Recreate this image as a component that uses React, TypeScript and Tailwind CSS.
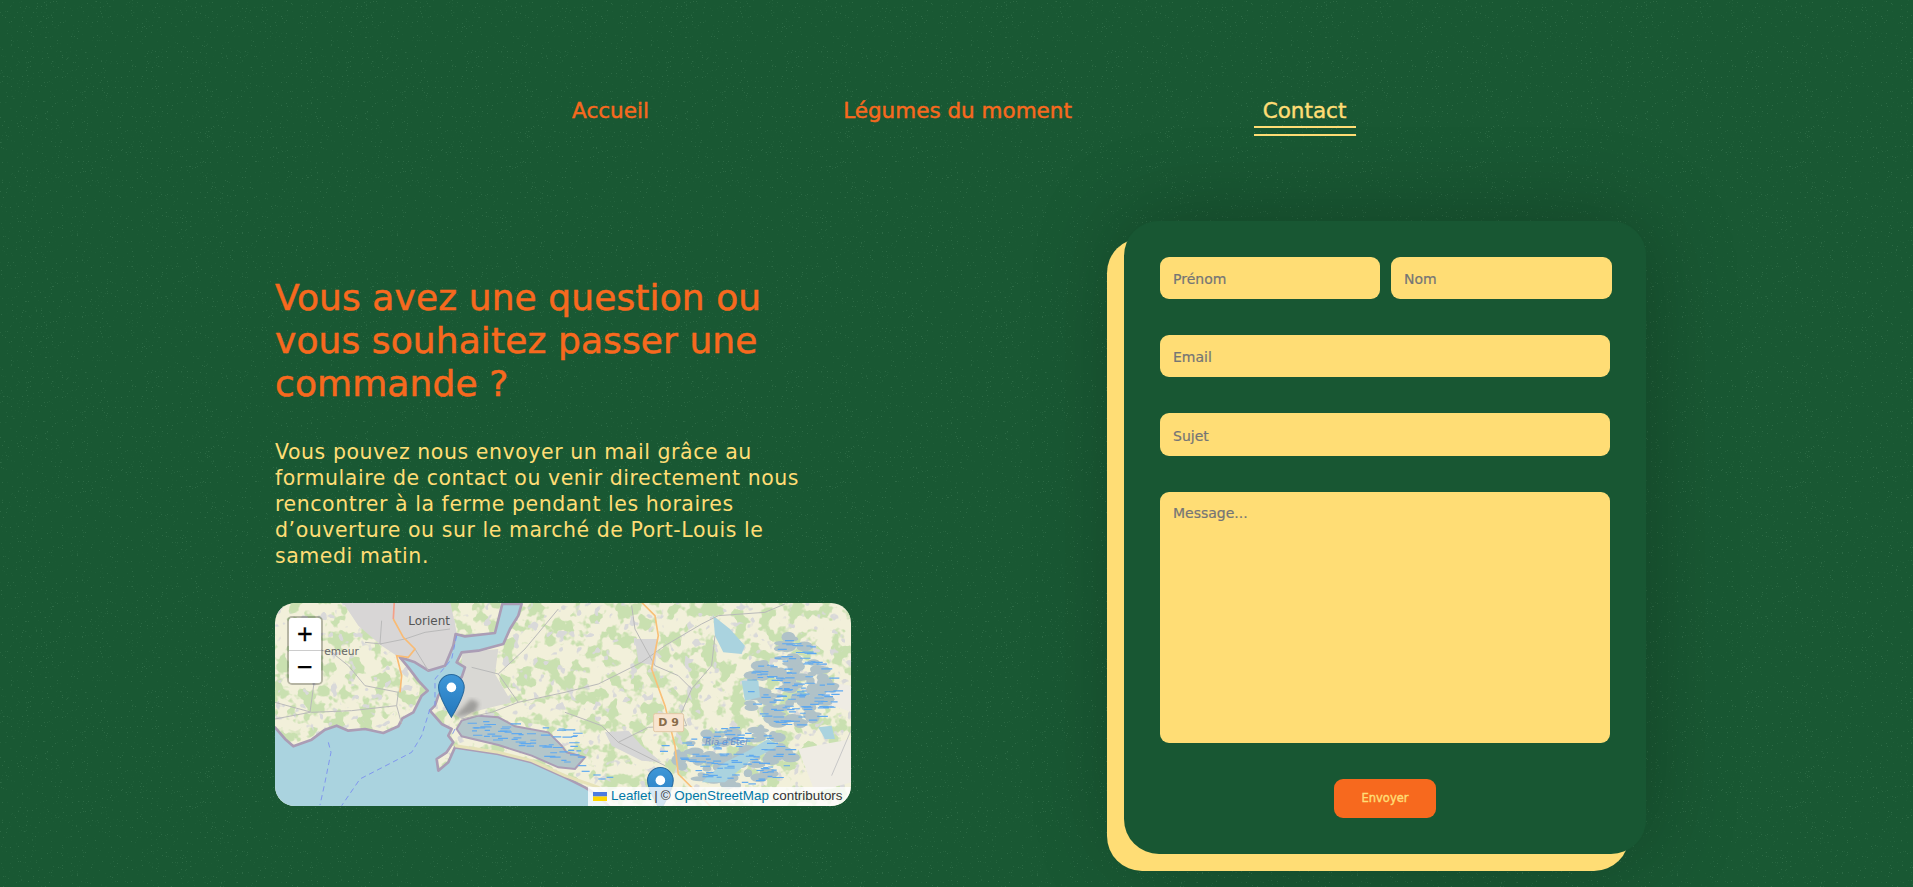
// small seeded generator, so the map dashes stay the same between runs
const makeRandom = (seed: number) => () => {
  seed = (seed * 16807) % 2147483647;
  return seed / 2147483647;
};

const rnd = makeRandom(4242);

const marshAreas = [
  [1440, 180, 270, 210],
  [1235, 390, 345, 180],
  [1525, 120, 115, 95],
];
const inMarsh = () => {
  const [x, y, w, h] = marshAreas[rnd() < 0.46 ? 0 : rnd() < 0.85 ? 1 : 2];
  const a = rnd() * Math.PI * 2;
  const r = Math.sqrt(rnd()) * 0.5;
  return { x: x + w / 2 + Math.cos(a) * r * w, y: y + h / 2 + Math.sin(a) * r * h };
};
const marshBlobs = Array.from({ length: 170 }, () => ({ ...inMarsh(), rx: 10 + rnd() * 18, ry: 6 + rnd() * 11 }));
const marshDashes = [
  ...Array.from({ length: 210 }, () => ({ ...inMarsh(), len: 14 + rnd() * 20 })),
  ...Array.from({ length: 90 }, () => ({ x: 600 + rnd() * 340, y: 372 + rnd() * 135, len: 14 + rnd() * 20 })).filter(
    (d) => d.y > 362 + (d.x - 590) * 0.13 && d.y < 415 + (d.x - 590) * 0.28,
  ),
  { x: 1190, y: 450, len: 24 },
  { x: 1185, y: 467, len: 24 },
  { x: 940, y: 510, len: 24 },
  { x: 950, y: 527, len: 24 },
  { x: 985, y: 538, len: 22 },
  { x: 1000, y: 550, len: 22 },
  { x: 1025, y: 545, len: 20 },
];

const Marker = ({ x, y }: { x: number; y: number }) => (
  <g transform={`translate(${x},${y}) scale(1.07)`}>
    <path
      d="M12.5 0.5C5.9 0.5 0.5 5.9 0.5 12.5C0.5 21 12.5 40.5 12.5 40.5C12.5 40.5 24.5 21 24.5 12.5C24.5 5.9 19.1 0.5 12.5 0.5Z"
      fill="url(#pinFill)"
      stroke="#2a6a9e"
      strokeWidth="1"
    />
    <circle cx="12.5" cy="12.5" r="4.5" fill="#fff" />
  </g>
);

const MapDrawing = () => (
  <svg className="block w-full h-full" viewBox="0 0 576 203">
    <defs>
      <linearGradient id="pinFill" x1="0" y1="0" x2="0" y2="1">
        <stop offset="0%" stopColor="#3f97d8" />
        <stop offset="100%" stopColor="#2478bd" />
      </linearGradient>
      <filter id="soft">
        <feGaussianBlur stdDeviation="2" />
      </filter>
      <filter id="coast">
        <feGaussianBlur stdDeviation="1.2" />
      </filter>
      <filter id="pinShadow">
        <feGaussianBlur stdDeviation="2" />
      </filter>
      {/* farmland mottling */}
      <filter id="fields" x="0" y="0" width="100%" height="100%" colorInterpolationFilters="sRGB">
        <feTurbulence type="fractalNoise" baseFrequency="0.07" numOctaves="3" seed="11" />
        <feColorMatrix values="0 0 0 0 0.79  0 0 0 0 0.88  0 0 0 0 0.69  0 0 0 12 -6" />
        <feGaussianBlur stdDeviation="0.5" />
      </filter>
      <filter id="hamlets" x="0" y="0" width="100%" height="100%" colorInterpolationFilters="sRGB">
        <feTurbulence type="fractalNoise" baseFrequency="0.11" numOctaves="2" seed="31" />
        <feColorMatrix values="0 0 0 0 0.85  0 0 0 0 0.85  0 0 0 0 0.85  0 0 0 14 -9" />
        <feGaussianBlur stdDeviation="0.5" />
      </filter>
    </defs>
    <rect width="576" height="203" fill="#f2f0da" />
    <rect width="576" height="203" filter="url(#fields)" />
    <rect width="576" height="203" filter="url(#hamlets)" />

    {/* coordinates below are 3x zoom units of the reference */}
    <g transform="translate(-10,-7.33) scale(0.3333)">
      <g filter="url(#soft)">
        {/* Lorient urban area */}
        <path
          d="M330,15 L555,15 L575,110 L550,205 L490,225 L430,215 L395,180 L350,150 L280,90 L230,15 Z"
          fill="#d8d6d6"
        />
        <path d="M590,170 L700,160 L690,235 L740,320 L620,350 L590,370 L540,340 L590,245 Z" fill="#d9d8d4" />
        <path d="M1110,130 L1180,130 L1170,210 L1120,200 Z" fill="#d6d6d6" />
        <path d="M1020,410 L1090,405 L1130,450 L1190,500 L1130,495 L1040,450 Z" fill="#d6d6d6" />
        <path d="M1630,250 L1760,270 L1760,350 L1680,320 Z M1600,460 L1760,430 L1760,560 L1650,590 Z" fill="#efece4" />
      </g>

      {/* Ria d'Etel marshes */}
      <g fill="#b0c2c8" filter="url(#soft)">
        {marshBlobs.map((b, i) => (
          <ellipse key={i} cx={b.x} cy={b.y} rx={b.rx} ry={b.ry} />
        ))}
      </g>

      {/* sea, estuary and coast */}
      <path
        d="M10,395 L30,395 L60,430 L85,452 L140,432 L180,402 L215,390 L250,405 L300,400 L355,412 L400,392 L412,368 L445,350 L470,300 L488,285 L460,255 L430,215 L405,185 L450,200 L490,225 L540,210 L565,150 L572,115 L600,122 L690,112 L712,25 L770,25 L760,60 L735,100 L715,145 L640,165 L590,170 L575,200 L600,215 L590,245 L545,265 L520,300 L510,330 L495,345 L530,385 L560,400 L550,420 L565,440 L545,470 L515,490 L520,525 L550,500 L570,455 L700,475 L800,500 L900,545 L960,575 L1000,600 L1040,640 L1040,660 L10,660 Z"
        fill="#aad3df"
        stroke="#ab9db5"
        strokeWidth="8"
        strokeLinejoin="round"
        filter="url(#coast)"
      />
      <path d="M570,450 L700,470 L800,495 L900,540 L1000,575 L1050,620" fill="none" stroke="#e6e2b8" strokeWidth="9" />
      <path
        d="M590,375 L640,360 L700,365 L750,392 L850,410 L890,450 L905,470 L960,485 L930,520 L880,515 L800,480 L700,448 L590,422 L575,400 Z"
        fill="#b3c6ca"
        stroke="#ab9db5"
        strokeWidth="6"
        filter="url(#coast)"
      />
      <g fill="#aad3df" filter="url(#soft)">
        <path d="M1345,60 L1395,100 L1440,150 L1430,175 L1375,170 L1350,120 Z" />
        <path d="M1430,255 L1480,255 L1485,305 L1440,315 Z" />
        <path d="M1330,540 L1380,500 L1450,465 L1510,430 L1540,450 L1450,500 L1380,560 L1310,560 Z" />
        <path d="M1660,395 L1700,390 L1710,430 L1680,430 Z" />
      </g>

      {marshDashes.map((d, i) => (
        <line key={i} x1={d.x} y1={d.y} x2={d.x + d.len} y2={d.y} stroke="#5ea9f0" strokeWidth="3.5" />
      ))}

      {/* minor roads */}
      <g fill="none" stroke="#b9b9b9" strokeWidth="3">
        <path d="M30,320 L140,350 L260,345 L395,330 L400,290 L300,270 L250,210 L200,170 L100,150" />
        <path d="M30,370 L135,350 L150,240 M395,330 L410,385" />
        <path d="M350,75 L345,145 L420,130 L480,110 L555,100 M420,130 L450,160 L490,225 M350,145 L300,140" />
        <path d="M590,370 L680,350 L760,320 L900,290 L1000,265 L1130,200 L1200,150 L1310,85 L1360,60 L1500,50 L1560,25" />
        <path d="M700,235 L780,160 L880,40 M760,320 L700,235 L620,215" />
        <path d="M900,350 L1010,390 L1060,440 L1200,510 M1060,440 L1150,395 L1265,390" />
        <path d="M1100,30 L1110,100 L1170,210 L1240,240 L1280,280 L1340,210 L1350,120 M1280,280 L1250,350 L1265,390" />
      </g>
      <path d="M1700,540 L1760,400" fill="none" stroke="#c7c7c7" strokeWidth="3" />

      {/* main roads */}
      <path d="M388,15 L385,70" fill="none" stroke="#f5a088" strokeWidth="5" />
      <path
        d="M385,70 L415,125 L450,160 L430,185 L395,180 L410,240 L405,290"
        fill="none"
        stroke="#f9bb74"
        strokeWidth="5"
      />
      <path
        d="M1125,15 L1170,60 L1180,120 L1160,220 L1200,330 L1230,450 L1240,535 L1340,635"
        fill="none"
        stroke="#f9c078"
        strokeWidth="5"
      />

      {/* channel lines at sea */}
      <g fill="none" stroke="#7f96ee" strokeWidth="3" strokeDasharray="16 11">
        <path d="M190,440 L198,470 L180,560 L165,628" />
        <path d="M495,340 L470,420 L440,470 L285,550 L230,630" />
        <path d="M575,120 L560,190 L510,250 L510,330 M570,400 L560,420" />
      </g>

      {/* labels */}
      <text x="430" y="87" fontSize="36" fill="#555" fontFamily="'DejaVu Sans', sans-serif">
        Lorient
      </text>
      <text x="178" y="177" fontSize="32" fill="#666" fontFamily="'DejaVu Sans', sans-serif">
        emeur
      </text>
      <text x="1320" y="449" fontSize="27" fontStyle="italic" fill="#6d90c4" fontFamily="'DejaVu Sans', sans-serif">
        Ria d'Etel
      </text>
      <rect x="1166" y="354" width="90" height="54" rx="5" fill="#f8e5d0" stroke="#e2c8a5" strokeWidth="3" />
      <text x="1211" y="392" textAnchor="middle" fontSize="33" fontWeight="700" fill="#8a6d4b" fontFamily="'DejaVu Sans', sans-serif">
        D 9
      </text>
    </g>

    {/* marker shadow and markers */}
    <path d="M178 115 L196 96 L204 100 L200 110 Z" fill="#333" opacity="0.35" filter="url(#pinShadow)" />
    <Marker x={163} y={71} />
    <Marker x={372} y={164} />
  </svg>
);

const fieldClass =
  "block h-[42px] rounded-[9px] bg-[#FFDD75] px-[13px] pt-[2px] text-[14px] text-[#333] placeholder:text-[#757575] outline-none [-webkit-text-stroke:0.2px_#757575]";

export default function App() {
  return (
    <div className="relative h-[887px] overflow-hidden bg-[#195833] font-['DejaVu_Sans',sans-serif]">
      {/* Speckled paper texture */}
      <svg className="absolute inset-0 w-full h-full pointer-events-none">
        <filter id="grain" colorInterpolationFilters="sRGB">
          <feTurbulence type="fractalNoise" baseFrequency="0.8" numOctaves="3" seed="7" />
          <feColorMatrix values="0 0 0 0 0.45  0 0 0 0 0.68  0 0 0 0 0.52  0 0 0 12 -8.6" />
        </filter>
        <rect width="100%" height="100%" filter="url(#grain)" opacity="0.22" />
      </svg>

      <div className="relative">
        {/* Nav */}
        <nav className="flex items-start justify-center pl-[2px] pt-[96px] text-[21.5px] leading-[30px] [-webkit-text-stroke:0.45px]">
          <a className="w-[347px] text-center text-[#F7691E]">Accueil</a>
          <a className="w-[347px] text-center text-[#F7691E]">Légumes du moment</a>
          <div className="flex w-[347px] justify-center text-[#FFDD75]">
            <a className="block w-[102px] border-b-2 border-[#FFDD75] pb-[6px] text-center">
              <span className="block border-b-2 border-[#FFDD75]">Contact</span>
            </a>
          </div>
        </nav>

        <main className="mt-[85px] flex pl-[275px]">
          {/* Left column */}
          <div className="w-[576px] pt-[55px]">
            <h1 className="w-[520px] text-[36px] leading-[43px] tracking-[0.1px] text-[#F7691E] [-webkit-text-stroke:0.5px]">
              Vous avez une question ou vous souhaitez passer une commande ?
            </h1>
            <p className="mt-[34px] w-[545px] text-[20.5px] leading-[26px] tracking-[0.55px] text-[#FFDD75]">
              Vous pouvez nous envoyer un mail grâce au formulaire de contact ou venir directement nous rencontrer à la
              ferme pendant les horaires d’ouverture ou sur le marché de Port-Louis le samedi matin.
            </p>

            {/* Map */}
            <div className="relative mt-[34px] h-[203px] w-[576px] overflow-hidden rounded-[20px]">
              <MapDrawing />
              <div className="absolute left-[12px] top-[13px] w-[36px] rounded-[5px] border-2 border-black/25 bg-clip-padding font-['Liberation_Sans',sans-serif] text-black">
                <div className="flex h-[33px] items-center justify-center rounded-t-[3px] border-b border-[#ccc] bg-white text-[27px] [-webkit-text-stroke:0.3px]">
                  +
                </div>
                <div className="flex h-[32px] items-center justify-center rounded-b-[3px] bg-white text-[27px] [-webkit-text-stroke:0.3px]">
                  −
                </div>
              </div>
              <div className="absolute bottom-0 right-0 flex h-[19px] w-[263px] items-center rounded-br-[20px] bg-white/80 pl-[5px] font-['Liberation_Sans',sans-serif] text-[13.4px] text-[#333]">
                <svg className="mr-[4px]" width="14" height="9" viewBox="0 0 14 9">
                  <rect width="14" height="4.5" fill="#4C7BE1" />
                  <rect y="4.5" width="14" height="4.5" fill="#FFD500" />
                </svg>
                <a className="text-[#0078A8]">Leaflet</a>
                <span className="mx-[3px]">|</span>
                <span>©&nbsp;</span>
                <a className="text-[#0078A8]">OpenStreetMap</a>
                <span>&nbsp;contributors</span>
              </div>
            </div>
          </div>

          {/* Form card */}
          <div className="relative ml-[273px] w-[522px] rounded-[35px] shadow-[0_0_90px_rgba(0,0,0,0.26)]">
            <div className="absolute -left-[17px] top-[17px] h-full w-full rounded-[35px] bg-[#FFDD75]" />
            <form className="relative flex flex-col rounded-[35px] bg-[#185733] p-[36px]">
              <div className="flex w-[452px] gap-[11px]">
                <input className={`${fieldClass} w-[220px]`} placeholder="Prénom" />
                <input className={`${fieldClass} w-[221px]`} placeholder="Nom" />
              </div>
              <input className={`${fieldClass} mt-[36px] w-[450px]`} placeholder="Email" />
              <input className={`${fieldClass} mt-[36px] h-[43px] w-[450px]`} placeholder="Sujet" />
              <textarea
                className="mt-[36px] block h-[251px] w-[450px] resize-none rounded-[9px] bg-[#FFDD75] px-[13px] py-[11px] text-[14px] text-[#333] outline-none placeholder:text-[#757575] [-webkit-text-stroke:0.2px_#757575]"
                placeholder="Message..."
              />
              <button
                type="button"
                className="mt-[36px] h-[39px] w-[102px] self-center rounded-[9px] bg-[#F7691E] text-[11.5px] text-[#FFDD75] [-webkit-text-stroke:0.4px]"
              >
                Envoyer
              </button>
            </form>
          </div>
        </main>
      </div>
    </div>
  );
}
